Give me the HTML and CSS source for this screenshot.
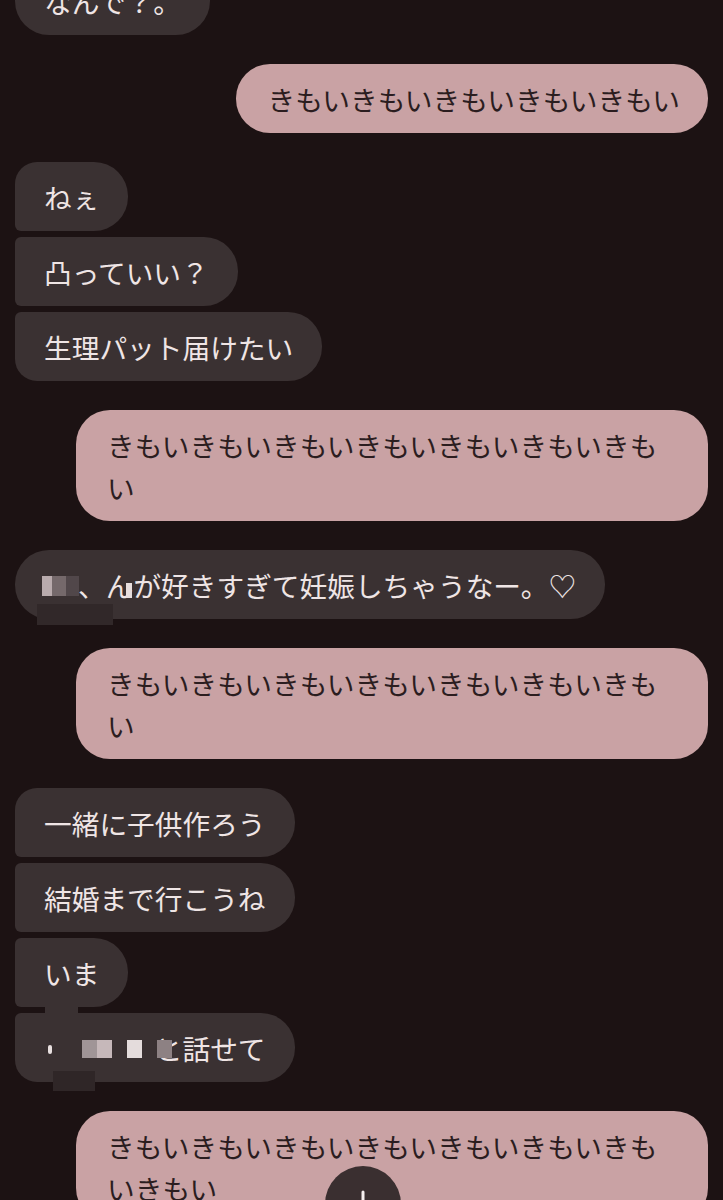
FILE: index.html
```html
<!DOCTYPE html>
<html lang="ja">
<head>
<meta charset="utf-8">
<title>chat</title>
<link rel="stylesheet" href="styles.css">
</head>
<body>
<main class="chat">
  <div class="msg recv round cut">なんで？。</div>

  <div class="msg sent">きもいきもいきもいきもいきもい</div>

  <div class="group">
    <div class="msg recv first">ねぇ</div>
    <div class="msg recv mid">凸っていい？</div>
    <div class="msg recv last">生理パット届けたい</div>
  </div>

  <div class="msg sent">きもいきもいきもいきもいきもいきもいきもい</div>

  <div class="msg recv round masked">
    <span class="blank blank-a"></span>、ん<span class="speck"></span>が好きすぎて妊娠しちゃうなー。♡
    <span class="px px-a1"></span><span class="px px-a2"></span><span class="px px-a3"></span>
    <span class="smear smear-a"></span>
  </div>

  <div class="msg sent">きもいきもいきもいきもいきもいきもいきもい</div>

  <div class="group">
    <div class="msg recv first">一緒に子供作ろう</div>
    <div class="msg recv mid">結婚まで行こうね</div>
    <div class="msg recv mid">いま</div>
    <div class="msg recv last masked"><span class="blank blank-b"></span>と話せて
      <span class="tick"></span>
      <span class="px px-b1"></span><span class="px px-b2"></span><span class="px px-b3"></span><span class="px px-b4"></span>
      <span class="smear smear-b"></span>
      <span class="smear smear-top"></span>
    </div>
  </div>

  <div class="msg sent">きもいきもいきもいきもいきもいきもいきもいきもい</div>
</main>

<div class="fab" aria-hidden="true">
  <svg width="76" height="76" viewBox="0 0 76 76">
    <line x1="38" y1="26" x2="38" y2="52" stroke="#f4eeee" stroke-width="3" stroke-linecap="round"/>
    <polyline points="28,43 38,53 48,43" fill="none" stroke="#f4eeee" stroke-width="3" stroke-linecap="round" stroke-linejoin="round"/>
  </svg>
</div>
</body>
</html>
```

FILE: styles.css
```css
html, body {
  margin: 0;
  padding: 0;
  background: #1c1213;
}

body {
  font-family: "Noto Sans CJK JP", "Noto Sans", sans-serif;
  overflow: hidden;
}

.chat {
  display: flex;
  flex-direction: column;
  gap: 29px;
  padding: 0 15px;
  margin-top: -34px;
}

.group {
  display: flex;
  flex-direction: column;
  align-items: flex-start;
  gap: 6px;
}

.msg {
  box-sizing: border-box;
  font-size: 27.7px;
  line-height: 42px;
  padding: 13.5px 29px;
  border-radius: 34px;
  word-break: break-all;
}

.recv {
  align-self: flex-start;
  background: #3a3132;
  color: #efe5e5;
}

.sent {
  align-self: flex-end;
  max-width: 632px;
  background: #c9a2a4;
  color: #2b1d1f;
  padding-left: 31px;
  padding-right: 28px;
}

.first {
  border-radius: 22px 34px 34px 6px;
}

.mid {
  border-radius: 6px 34px 34px 6px;
}

.last {
  border-radius: 6px 34px 34px 22px;
}

.masked {
  position: relative;
}

.blank {
  display: inline-block;
  height: 1px;
}

.blank-a {
  width: 34px;
}

.blank-b {
  width: 110.8px;
}

.speck {
  display: inline-block;
  width: 6px;
  height: 15px;
  margin-left: -7px;
  margin-right: 1px;
  background: #e6dddd;
  vertical-align: -1px;
}

.px {
  position: absolute;
}

.px-a1 { left: 27px; top: 26px; width: 10px; height: 20px; background: #b9abad; }
.px-a2 { left: 37px; top: 26px; width: 14px; height: 20px; background: #75696b; }
.px-a3 { left: 51px; top: 26px; width: 13px; height: 20px; background: #51474a; }

.smear {
  position: absolute;
  background: #312829;
}

.smear-a {
  left: 22px;
  top: 54px;
  width: 76px;
  height: 21px;
}

.tick {
  position: absolute;
  left: 33px;
  top: 32px;
  width: 4px;
  height: 9px;
  border-radius: 2px;
  background: #e8e0e0;
}

.px-b1 { left: 67px; top: 27px; width: 15px; height: 18px; background: #a09597; }
.px-b2 { left: 82px; top: 27px; width: 15px; height: 18px; background: #c6b8ba; }
.px-b3 { left: 112px; top: 27px; width: 15px; height: 18px; background: #e4dcdc; }
.px-b4 { left: 142px; top: 27px; width: 15px; height: 18px; background: #8d8183; }

.smear-b {
  left: 38px;
  top: 58px;
  width: 42px;
  height: 20px;
  background: #2f2627;
}

.smear-top {
  left: 30px;
  top: -8px;
  width: 33px;
  height: 10px;
  background: #3a3132;
}

.fab {
  position: fixed;
  left: 325px;
  top: 1166px;
  width: 76px;
  height: 76px;
  border-radius: 50%;
  background: #3a2f30;
  display: flex;
  align-items: center;
  justify-content: center;
}
```
